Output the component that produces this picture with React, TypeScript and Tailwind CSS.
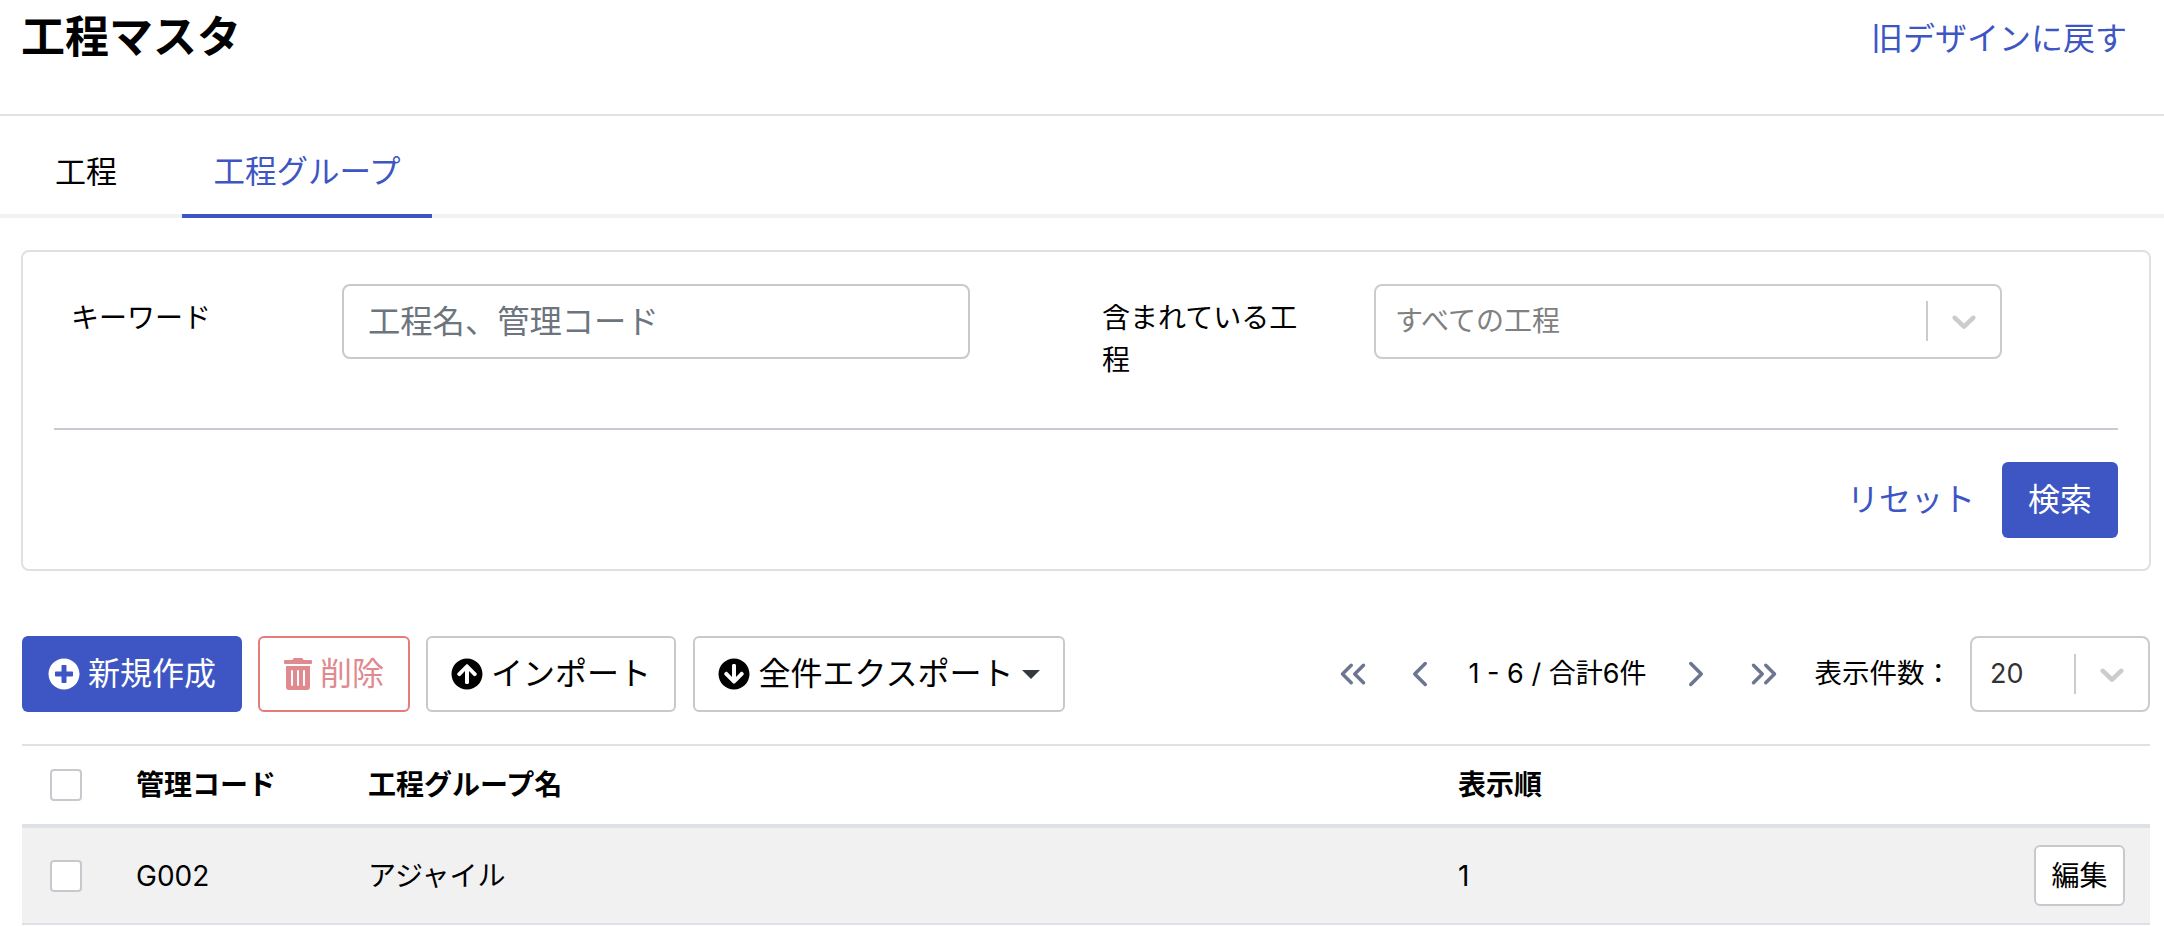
import { FaArrowCircleDown, FaArrowCircleUp, FaPlusCircle, FaTrashAlt } from 'react-icons/fa';
import { ChevronLeft, ChevronRight, ChevronsLeft, ChevronsRight } from 'lucide-react';

function SelectArrow() {
  return (
    <svg viewBox="0 0 20 20" className="w-[40px] h-[40px] fill-[#cccccc]">
      <path d="M4.516 7.548c0.436-0.446 1.043-0.481 1.576 0l3.908 3.747 3.908-3.747c0.533-0.481 1.141-0.446 1.574 0 0.436 0.445 0.408 1.197 0 1.615-0.406 0.418-4.695 4.502-4.695 4.502-0.217 0.223-0.502 0.335-0.787 0.335s-0.57-0.112-0.789-0.335c0 0-4.287-4.084-4.695-4.502s-0.436-1.17 0-1.615z" />
    </svg>
  );
}

function Checkbox() {
  return <span className="block w-[32px] h-[32px] rounded-[4px] border-2 border-[#c6cacf] bg-white" />;
}

export default function App() {
  return (
    <div className="w-[2164px] h-[926px] overflow-hidden bg-white text-black font-['Inter','Noto_Sans_CJK_JP',sans-serif]">
      <header className="h-[116px] border-b-2 border-[#dee2e6] flex justify-between pl-[21px] pr-[37px]">
        <h1 className="text-[44px] leading-[74px] font-bold">工程マスタ</h1>
        <a className="text-[32px] leading-[78px] text-[#3d56c4]">旧デザインに戻す</a>
      </header>

      <nav className="h-[102px] border-b-4 border-[#f1f2f4] flex">
        <div className="w-[182px] h-[102px] pl-[55px] pt-[11px] flex items-center text-[31px]">工程</div>
        <div className="w-[250px] h-[102px] pt-[13px] flex items-center justify-center text-[31.5px] text-[#3d56c4] border-b-4 border-[#3d56c4]">
          工程グループ
        </div>
      </nav>

      <section className="mt-[32px] ml-[21px] w-[2130px] h-[321px] rounded-[8px] border-2 border-[#e0e0e0] px-[31px] pt-[32px]">
        <div className="flex h-[146px] border-b-2 border-[#c6cbd1]">
          <label className="w-[288px] pl-[17px] pt-[13px] text-[28px] leading-[42px]">キーワード</label>
          <input
            placeholder="工程名、管理コード"
            className="w-[628px] h-[75px] px-[24px] rounded-[8px] border-2 border-[#c6cacf] text-[32.3px] placeholder:text-[#6c757d]"
          />
          <label className="w-[272px] ml-[132px] pr-[59px] pt-[13px] text-[28px] leading-[42px]">含まれている工程</label>
          <div className="w-[628px] h-[75px] flex items-center rounded-[8px] border-2 border-[#cccccc] pl-[20px] pb-[1px]">
            <span className="flex-1 -ml-[1px] text-[28px] text-[#808080]">すべての工程</span>
            <span className="w-[2px] h-[40px] bg-[#cccccc]" />
            <span className="w-[72px] flex justify-center"><SelectArrow /></span>
          </div>
        </div>
        <div className="flex justify-end items-center gap-[27px] pt-[32px]">
          <a className="text-[32px] text-[#3d56c4]">リセット</a>
          <button className="w-[116px] h-[76px] rounded-[6px] bg-[#3d56c4] text-white text-[32px]">検索</button>
        </div>
      </section>

      <div className="mt-[65px] ml-[22px] mr-[14px] flex items-center h-[76px]">
        <button className="w-[220px] h-[76px] rounded-[6px] bg-[#3d56c4] text-white text-[32px] flex items-center justify-center gap-[8px]">
          <FaPlusCircle className="w-[32px] h-[32px]" />新規作成
        </button>
        <button className="ml-[16px] w-[152px] h-[76px] rounded-[6px] border-2 border-[#e57c7c] text-[#e08a8f] text-[32px] flex items-center justify-center gap-[8px]">
          <FaTrashAlt className="w-[28px] h-[32px]" />削除
        </button>
        <button className="ml-[16px] w-[250px] h-[76px] rounded-[6px] border-2 border-[#c6cacf] text-[32px] flex items-center justify-center gap-[8px]">
          <FaArrowCircleUp className="w-[32px] h-[32px]" />インポート
        </button>
        <button className="ml-[17px] w-[372px] h-[76px] rounded-[6px] border-2 border-[#c6cacf] text-[32px] flex items-center justify-center gap-[8px]">
          <FaArrowCircleDown className="w-[32px] h-[32px]" />全件エクスポート
          <span className="w-0 h-0 border-x-[9px] border-x-transparent border-t-[9px] border-t-[#343a40]" />
        </button>

        <div className="ml-auto flex items-center text-[#6c7690]">
          <ChevronsLeft className="w-[42px] h-[42px]" strokeWidth={2} />
          <ChevronLeft className="ml-[25px] w-[42px] h-[42px]" strokeWidth={2} />
          <span className="ml-[28px] text-[27px] text-black">1 - 6 / 合計6件</span>
          <ChevronRight className="ml-[28px] w-[42px] h-[42px]" strokeWidth={2} />
          <ChevronsRight className="ml-[26px] w-[42px] h-[42px]" strokeWidth={2} />
          <span className="ml-[30px] text-[27.5px] text-black">表示件数：</span>
          <div className="ml-[18px] w-[180px] h-[76px] flex items-center rounded-[8px] border-2 border-[#cccccc] pl-[18px]">
            <span className="flex-1 text-[27px] text-[#333333]">20</span>
            <span className="w-[2px] h-[40px] bg-[#cccccc]" />
            <span className="w-[72px] flex justify-center"><SelectArrow /></span>
          </div>
        </div>
      </div>

      <table className="mt-[32px] ml-[22px] w-[2128px] text-[28px] border-collapse table-fixed">
        <thead>
          <tr className="h-[81px] border-t-2 border-b-4 border-[#dee2e6]">
            <th className="w-[114px] pl-[28px] text-left"><Checkbox /></th>
            <th className="w-[232px] text-left font-bold">管理コード</th>
            <th className="w-[1090px] text-left font-bold">工程グループ名</th>
            <th className="text-left font-bold">表示順</th>
            <th className="w-[120px]" />
          </tr>
        </thead>
        <tbody>
          <tr className="h-[98px] bg-[#f1f1f2] border-b-2 border-[#dee2e6]">
            <td className="pl-[28px]"><Checkbox /></td>
            <td>G002</td>
            <td>アジャイル</td>
            <td>1</td>
            <td className="pr-[25px] text-right">
              <button className="w-[91px] h-[61px] rounded-[6px] border-2 border-[#c6cacf] bg-white text-[28px]">編集</button>
            </td>
          </tr>
        </tbody>
      </table>
    </div>
  );
}
